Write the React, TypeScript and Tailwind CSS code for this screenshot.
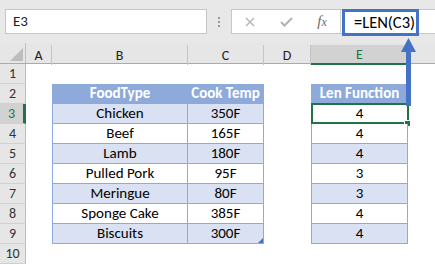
import React from 'react';

const FONT = { fontFamily: 'Calibri, Carlito, "Liberation Sans", Arial, sans-serif' };

const foods = [
  { name: 'Chicken', temp: '350F', len: 4 },
  { name: 'Beef', temp: '165F', len: 4 },
  { name: 'Lamb', temp: '180F', len: 4 },
  { name: 'Pulled Pork', temp: '95F', len: 3 },
  { name: 'Meringue', temp: '80F', len: 3 },
  { name: 'Sponge Cake', temp: '385F', len: 4 },
  { name: 'Biscuits', temp: '300F', len: 4 },
];

const columns = [
  { label: 'A', w: 'w-[26px]' },
  { label: 'B', w: 'w-[136px]' },
  { label: 'C', w: 'w-[76px]' },
  { label: 'D', w: 'w-[47px]' },
  { label: 'E', w: 'w-[97px]' },
];

const RowHead = ({ n, active }: { n: number; active?: boolean }) => (
  <div
    className={`w-[26px] h-full shrink-0 flex items-center justify-center text-[14px] border-b border-[#d0d0d0] ${
      active
        ? 'bg-[#d2d2d2] text-[#217346] border-r-[3px] border-r-[#217346]'
        : 'bg-[#e6e6e6] text-[#333] border-r border-r-[#bdbdbd]'
    }`}
  >
    {n}
  </div>
);

const HeadCell = ({ children, w, first }: { children: React.ReactNode; w: string; first?: boolean }) => (
  <div
    className={`${w} h-full shrink-0 flex items-center justify-center bg-[#8eaadb] text-white font-bold text-[15px] border-b border-r border-[#8eaadb] ${
      first ? 'border-l' : ''
    }`}
  >
    {children}
  </div>
);

const BodyCell = ({
  children,
  w,
  band,
  first,
  extra,
}: {
  children: React.ReactNode;
  w: string;
  band: boolean;
  first?: boolean;
  extra?: React.ReactNode;
}) => (
  <div
    className={`${w} h-full shrink-0 relative flex items-center justify-center text-[15px] text-black border-b border-r border-[#8eaadb] ${
      first ? 'border-l' : ''
    } ${band ? 'bg-[#d9e1f2]' : 'bg-white'}`}
  >
    {children}
    {extra}
  </div>
);

export default function App() {
  return (
    <div className="w-[435px] h-[265px] overflow-hidden bg-white relative select-none" style={FONT}>
      {/* formula bar */}
      <div className="h-[43px] bg-[#e8e8e8] flex items-start pt-[9px] pl-[5px]">
        <div className="w-[202px] h-[25px] bg-white border border-[#c6c6c6] flex items-center pl-[7px] text-[15px] text-[#222]">
          E3
        </div>
        <div className="w-[24px] h-[25px] flex flex-col items-center justify-center gap-[2px]">
          <span className="w-[2px] h-[2px] bg-[#9a9a9a]" />
          <span className="w-[2px] h-[2px] bg-[#9a9a9a]" />
          <span className="w-[2px] h-[2px] bg-[#9a9a9a]" />
        </div>
        <div className="flex-1 h-[25px] bg-white border border-r-0 border-[#c6c6c6] flex">
          <div className="w-[109px] h-full flex items-center border-r border-[#d6d6d6]">
            <div className="w-[36px] flex justify-center">
              <svg width="10" height="10" viewBox="0 0 10 10">
                <path d="M1 1L9 9M9 1L1 9" stroke="#b3b3b3" strokeWidth="1.4" />
              </svg>
            </div>
            <div className="w-[36px] flex justify-center">
              <svg width="13" height="10" viewBox="0 0 13 10">
                <path d="M1 5L4.5 8.5L12 1" stroke="#b3b3b3" strokeWidth="2" fill="none" />
              </svg>
            </div>
            <div className="w-[36px] flex justify-center text-[#6d6d6d] italic text-[15px]" style={{ fontFamily: '"Liberation Serif", serif' }}>
              f<span className="text-[12px] mt-[3px]">x</span>
            </div>
          </div>
          <div className="w-[77px] h-[27px] -mt-[1px] ml-[1px] border-[3px] border-[#4472c4] bg-white flex items-center pl-[9px] text-[16.5px] text-black">
            =LEN(C3)
          </div>
        </div>
      </div>

      {/* column headers */}
      <div className="h-[21px] bg-[#e6e6e6] flex border-b border-[#ababab]">
        <div className="w-[26px] h-full shrink-0 border-r border-[#bdbdbd] flex items-end justify-end pr-[2px] pb-[2px]">
          <svg width="13" height="13" viewBox="0 0 13 13">
            <path d="M13 0L13 13L0 13Z" fill="#bdbdbd" />
          </svg>
        </div>
        {columns.map((c) => (
          <div
            key={c.label}
            className={`${c.w} shrink-0 h-full flex items-center justify-center text-[14px] ${
              c.label === 'E'
                ? 'bg-[#d2d2d2] text-[#217346] border-b-2 border-[#217346] mt-[2px] h-[19px]'
                : 'text-[#222] border-r border-[#c4c4c4] my-[2px] h-[17px]'
            }`}
          >
            {c.label}
          </div>
        ))}
        <div className="flex-1" />
      </div>

      {/* rows */}
      <div className="flex flex-col">
        <div className="h-[20px] flex">
          <RowHead n={1} />
        </div>
        <div className="h-[20px] flex">
          <RowHead n={2} />
          <div className="w-[26px] shrink-0" />
          <HeadCell w="w-[136px]" first>FoodType</HeadCell>
          <HeadCell w="w-[76px]">Cook Temp</HeadCell>
          <div className="w-[47px] shrink-0" />
          <HeadCell w="w-[97px]" first>Len Function</HeadCell>
        </div>
        {foods.map((f, i) => {
          const band = i % 2 === 0;
          const last = i === foods.length - 1;
          return (
            <div key={f.name} className="h-[20px] flex">
              <RowHead n={i + 3} active={i === 0} />
              <div className="w-[26px] shrink-0" />
              <BodyCell w="w-[136px]" band={band} first>
                {f.name}
              </BodyCell>
              <BodyCell
                w="w-[76px]"
                band={band}
                extra={
                  last ? (
                    <svg className="absolute right-0 bottom-0" width="5" height="5" viewBox="0 0 5 5">
                      <path d="M5 0L5 5L0 5Z" fill="#4472c4" />
                    </svg>
                  ) : null
                }
              >
                {f.temp}
              </BodyCell>
              <div className="w-[47px] shrink-0" />
              <BodyCell
                w="w-[97px]"
                band={i === 0 ? false : band}
                first
                extra={
                  i === 0 ? (
                    <>
                      <div className="absolute -left-[1px] -top-[1px] -right-[2px] -bottom-[1px] border-2 border-[#217346]" />
                      <div className="absolute -right-[4px] -bottom-[4px] w-[7px] h-[7px] bg-[#217346] border border-white" />
                    </>
                  ) : null
                }
              >
                {f.len}
              </BodyCell>
            </div>
          );
        })}
        <div className="h-[20px] flex">
          <RowHead n={10} />
        </div>
      </div>

      {/* arrow from E3 to the formula */}
      <svg className="absolute left-[400px] top-[37px]" width="17" height="70" viewBox="0 0 17 70">
        <path d="M8.5 1L16 15L11 15L11 69L6 69L6 15L1 15Z" fill="#4472c4" />
      </svg>
    </div>
  );
}
